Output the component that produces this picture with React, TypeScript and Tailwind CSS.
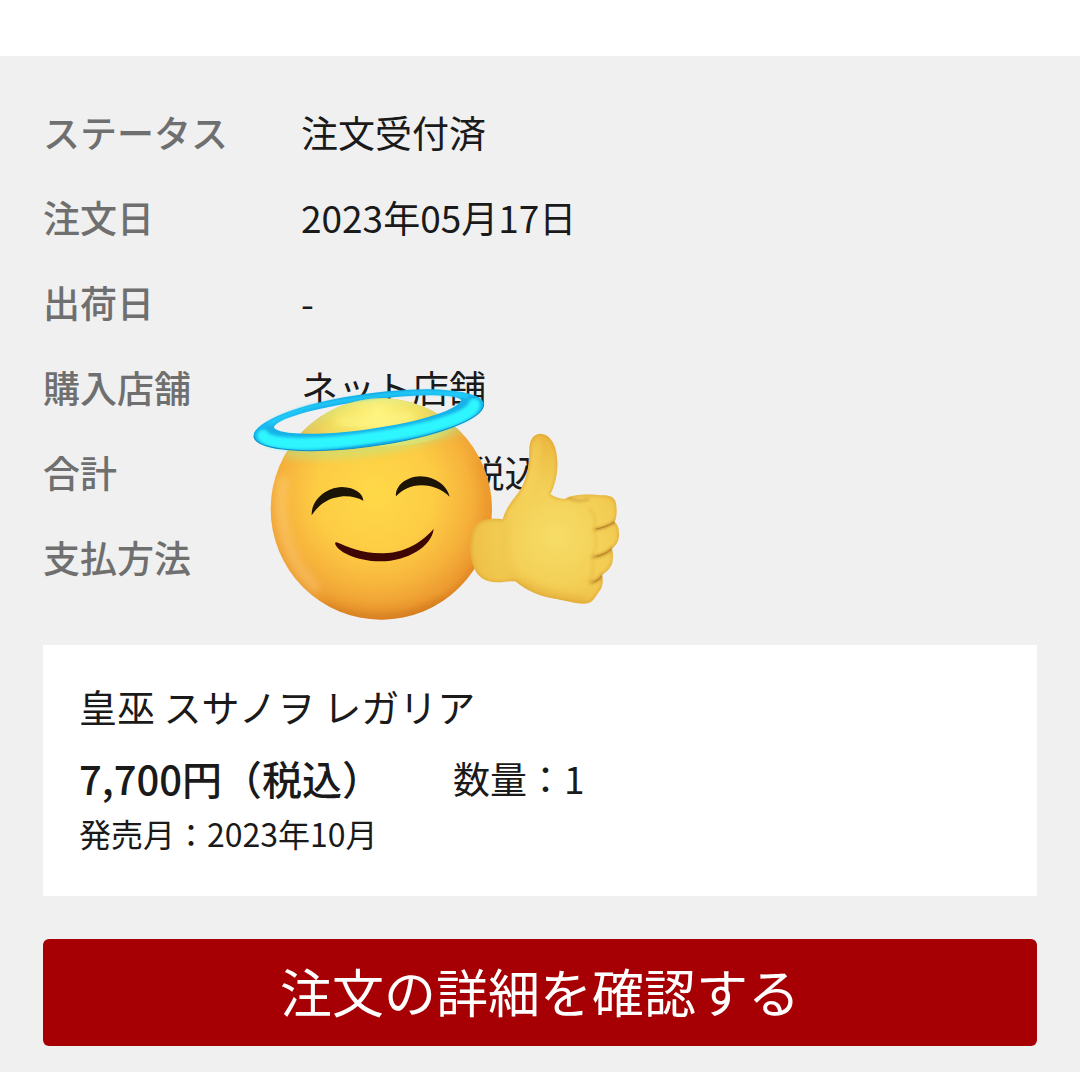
import React from 'react';

const orderRows = [
  { label: 'ステータス', value: '注文受付済' },
  { label: '注文日', value: '2023年05月17日' },
  { label: '出荷日', value: '-' },
  { label: '購入店舗', value: 'ネット店舗' },
  { label: '合計', value: '7,700円（税込）' },
  { label: '支払方法', value: '' },
];

const HaloSticker: React.FC = () => (
  <svg
    viewBox="0 0 1200 840"
    className="pointer-events-none absolute left-[197px] top-[271px] w-[400px]"
    aria-hidden="true"
  >
    <defs>
      <radialGradient id="face" gradientUnits="userSpaceOnUse" cx="405" cy="400" r="395">
        <stop offset="0" stopColor="#ffd948" />
        <stop offset="0.45" stopColor="#fdcc44" />
        <stop offset="0.72" stopColor="#f6b23b" />
        <stop offset="0.9" stopColor="#ec9a30" />
        <stop offset="1" stopColor="#d47a1c" />
      </radialGradient>
      <radialGradient id="crown" gradientUnits="userSpaceOnUse" cx="415" cy="160" r="250">
        <stop offset="0" stopColor="#fff480" />
        <stop offset="0.5" stopColor="#f4e060" />
        <stop offset="1" stopColor="#d8e880" stopOpacity="0" />
      </radialGradient>
      <linearGradient id="halo" x1="0" y1="0" x2="0" y2="1">
        <stop offset="0" stopColor="#10a0e0" />
        <stop offset="0.25" stopColor="#1cbcf4" />
        <stop offset="1" stopColor="#0e98d6" />
      </linearGradient>
      <radialGradient id="hand" gradientUnits="userSpaceOnUse" cx="950" cy="530" r="300">
        <stop offset="0" stopColor="#f6dc66" />
        <stop offset="0.45" stopColor="#f4d158" />
        <stop offset="0.8" stopColor="#efc249" />
        <stop offset="1" stopColor="#ebb840" />
      </radialGradient>
      <clipPath id="faceClip">
        <circle cx="424" cy="447" r="332" />
      </clipPath>
      <path
        id="handShape"
        d="M900 221C878 222 868 242 868 272C868 322 858 368 832 402C808 432 796 450 788 478C756 474 722 478 706 497C690 520 686 580 699 615C710 652 738 668 775 667C795 667 812 662 826 664C858 692 905 712 950 717C985 724 1020 734 1043 730C1062 724 1070 704 1083 686C1090 672 1089 658 1086 645C1105 632 1118 618 1118 600C1120 588 1119 575 1115 566C1132 556 1138 538 1137 520C1137 504 1132 492 1123 486C1131 474 1131 450 1128 430C1124 410 1108 405 1084 406C1050 402 1000 401 974 417C958 416 943 411 931 403C945 375 954 340 952 302C950 256 932 222 900 221Z"
      />
      <clipPath id="handClip">
        <use href="#handShape" />
      </clipPath>
      <filter id="soft4" x="-30%" y="-30%" width="160%" height="160%">
        <feGaussianBlur stdDeviation="4" />
      </filter>
      <filter id="soft14" x="-40%" y="-40%" width="180%" height="180%">
        <feGaussianBlur stdDeviation="14" />
      </filter>
    </defs>

    {/* halo, far side */}
    <g transform="rotate(-8 386 180)">
      <path
        fillRule="evenodd"
        fill="url(#halo)"
        d="M38 180a348 79 0 1 0 696 0a348 79 0 1 0 -696 0ZM101 164a285 43 0 1 0 570 0a285 43 0 1 0 -570 0Z"
      />
    </g>

    {/* face */}
    <circle cx="424" cy="447" r="332" fill="url(#face)" />
    <g clipPath="url(#faceClip)">
      <path d="M130 350C105 470 140 610 235 690" fill="none" stroke="#ffd88c" strokeWidth="30" opacity="0.45" filter="url(#soft14)" />
      <path d="M250 735C360 785 500 785 610 725" fill="none" stroke="#cf741a" strokeWidth="24" opacity="0.6" filter="url(#soft14)" />
      <path d="M715 300C765 420 750 560 670 660" fill="none" stroke="#e88a1e" strokeWidth="22" opacity="0.4" filter="url(#soft14)" />
      <ellipse cx="415" cy="165" rx="260" ry="95" fill="url(#crown)" />
      <path d="M130 276C300 292 500 262 670 198" fill="none" stroke="#b4e88c" strokeWidth="22" opacity="0.75" filter="url(#soft14)" />
      <path d="M175 230C240 150 330 110 430 110C510 110 570 125 625 165" fill="none" stroke="#b6ecA0" strokeWidth="14" opacity="0.7" filter="url(#soft14)" />
      <path d="M290 180C370 196 450 190 520 165" fill="none" stroke="#fffa90" strokeWidth="22" opacity="0.7" filter="url(#soft14)" />
    </g>

    <path d="M215 466C213 425 252 383 306 381C346 382 370 402 370 422C350 411 325 406 300 410C262 415 236 434 215 466Z" fill="#1c1406" />
    <path d="M468 409C465 377 500 350 540 349C587 350 622 378 629 410C605 388 578 376 545 376C510 377 490 388 468 409Z" fill="#1c1406" />
    <path d="M285 548C288 574 350 603 420 604C500 605 575 560 581 507C560 530 510 579 430 580C365 581 325 562 290 547Z" fill="#3d0503" />

    {/* halo, near side */}
    <g transform="rotate(-8 386 180)">
      <path
        fill="#16b2e8"
        d="M38 180C38 224 194 259 386 259C578 259 734 224 734 180C734 160 712 148 671 152C671 186 543 207 386 207C229 207 101 186 101 160C60 156 38 162 38 180Z"
      />
      <path d="M66 182C70 212 200 234 386 234C572 234 700 212 706 178" fill="none" stroke="#2ff6ff" strokeWidth="36" strokeLinecap="round" filter="url(#soft4)" />
      <path d="M90 150C170 112 270 111 386 111C510 111 620 122 690 152" fill="none" stroke="#24d2fa" strokeWidth="9" filter="url(#soft4)" />
      <path d="M38 180a348 79 0 0 0 696 0" fill="none" stroke="#0c90c8" strokeWidth="3" />
    </g>

    {/* thumbs up */}
    <use href="#handShape" fill="url(#hand)" />
    <g clipPath="url(#handClip)">
      <path d="M890 236C878 290 882 350 850 410" fill="none" stroke="#f9dc6a" strokeWidth="24" opacity="0.6" filter="url(#soft14)" />
      <use href="#handShape" fill="none" stroke="#d9982c" strokeWidth="7" opacity="0.6" filter="url(#soft4)" />
      <path d="M800 480C785 540 790 610 826 664" fill="none" stroke="#dfa738" strokeWidth="12" opacity="0.3" filter="url(#soft14)" />
      <path d="M826 664C890 705 960 718 1043 728" fill="none" stroke="#d99a2c" strokeWidth="16" opacity="0.7" filter="url(#soft14)" />
      <path d="M1045 445C1068 460 1070 490 1060 508C1074 535 1070 570 1054 592C1062 620 1060 650 1044 670" fill="none" stroke="#e0aa38" strokeWidth="6" opacity="0.4" filter="url(#soft4)" />
      <g fill="none" stroke="#b47c22" strokeWidth="6" strokeLinecap="round" filter="url(#soft4)">
        <path d="M1066 508C1085 505 1105 498 1124 486" />
        <path d="M1060 592C1080 588 1100 580 1116 566" />
        <path d="M1054 668C1066 666 1078 660 1087 646" />
        <path d="M985 413C1005 424 1025 424 1045 417" opacity="0.6" />
      </g>
      <g fill="none" stroke="#b47c22" strokeWidth="3" strokeLinecap="round">
        <path d="M1070 507C1088 503 1106 497 1124 486" />
        <path d="M1070 589C1086 585 1100 579 1116 566" />
        <path d="M1064 665C1072 662 1080 656 1087 646" />
      </g>
    </g>
  </svg>
);

export default function App() {
  return (
    <div
      lang="ja"
      className="min-h-screen bg-white pt-14 font-['Noto_Sans_CJK_JP',sans-serif] text-[37px] text-[#1a1a1a]"
    >
      <main className="bg-[#f0f0f0] px-[43px] pb-[26px] pt-[33px]">
        <div className="relative">
          <dl>
            {orderRows.map((row) => (
              <div key={row.label} className="flex h-[85px] items-center leading-[56px]">
                <dt className="w-[258px] shrink-0 font-medium text-[#6f6f6f]">{row.label}</dt>
                <dd>{row.value}</dd>
              </div>
            ))}
          </dl>
          <HaloSticker />
        </div>

        <section className="mt-[46px] bg-white px-9 pb-10 pt-[33px]">
          <h2 className="text-[38px] leading-[56px]">皇巫 スサノヲ レガリア</h2>
          <div className="mt-3 flex items-center">
            <p className="w-[374px] text-[40px] font-medium leading-[64px]">7,700円（税込）</p>
            <p className="leading-[56px]">数量：1</p>
          </div>
          <p className="text-[32px] leading-[46px]">発売月：2023年10月</p>
        </section>

        <button
          type="button"
          className="mt-[43px] h-[107px] w-full rounded-md bg-[#a60004] pb-1 text-[52px] text-white"
        >
          注文の詳細を確認する
        </button>
      </main>
    </div>
  );
}
